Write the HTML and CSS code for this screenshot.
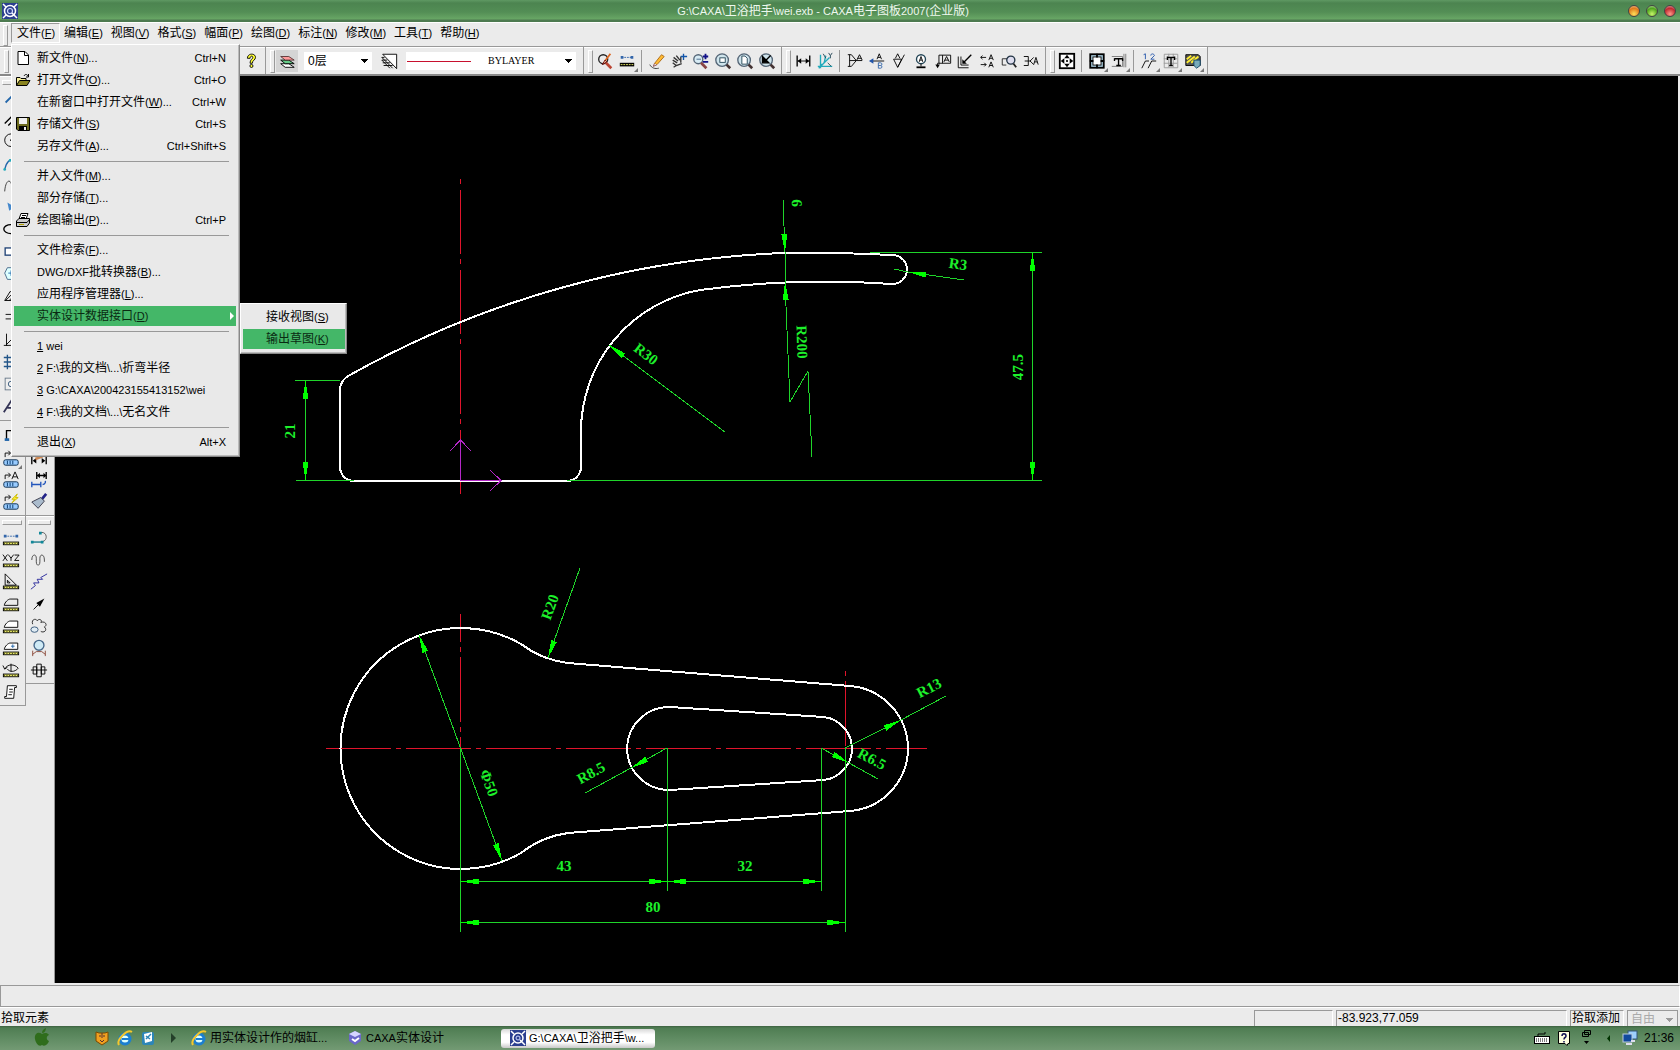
FILE: index.html
```html
<!DOCTYPE html>
<html lang="zh-CN">
<head>
    <meta charset="UTF-8">
    <meta name="viewport" content="width=device-width, initial-scale=1.0">
    <title>CAXA电子图板2007</title>
    <link rel="stylesheet" href="styles.css">
</head>
<body>

    <header class="titlebar">
        <svg class="app-icon" viewBox="0 0 16 16"><rect width="16" height="16" fill="#2b3f8f"/><circle cx="8" cy="8" r="5.500" fill="none" stroke="#fff" stroke-width="1.500"/><circle cx="8" cy="8" r="2.500" fill="none" stroke="#cfd8ff" stroke-width="1.200"/><path d="M10 10L15 15M1 1L4 4M15 1L12 4M1 15L4 12" stroke="#fff" stroke-width="1.500"/></svg>
        <h1>G:\CAXA\<span class="zh">卫浴把手</span>\wei.exb - CAXA<span class="zh">电子图板</span>2007(<span class="zh">企业版</span>)</h1>
        <div class="window-buttons">
            <button class="ball orange" aria-label="最小化"></button>
            <button class="ball green" aria-label="还原"></button>
            <button class="ball red" aria-label="关闭"></button>
        </div>
    </header>

    <!-- 菜单栏 -->
    <nav class="menubar">
        <ul>
            <li class="open">
                <button>文件<span>(<u>F</u>)</span></button>
                <div class="menu file-menu">
                    <button><svg viewBox="0 0 16 16"><path d="M3 1.500H10L13.500 5V14.500H3Z" fill="#fff" stroke="#000"/><path d="M9.500 1.500V5.500H13.500" fill="none" stroke="#000"/></svg>新文件<span>(<u>N</u>)...</span><kbd>Ctrl+N</kbd></button>
                    <button><svg viewBox="0 0 16 16"><path d="M1.500 13.500V5.500H5L6 6.500H11V8.500" fill="#f6ef9a" stroke="#000"/><path d="M1.500 13.500L4.500 8.500H15L12 13.500Z" fill="#8a8420" stroke="#000"/><path d="M9 4C10 2 12 2 13 4M13.500 2V5H11" fill="none" stroke="#000"/></svg>打开文件<span>(<u>O</u>)...</span><kbd>Ctrl+O</kbd></button>
                    <button>在新窗口中打开文件<span>(<u>W</u>)...</span><kbd>Ctrl+W</kbd></button>
                    <button><svg viewBox="0 0 16 16"><path d="M1.500 1.500H14.500V14.500H3L1.500 13Z" fill="#6d6b1e" stroke="#000"/><rect x="4" y="2" width="8" height="6" fill="#eee"/><rect x="4" y="10" width="8" height="5" fill="#000"/><rect x="9" y="11" width="2" height="3" fill="#eee"/></svg>存储文件<span>(<u>S</u>)</span><kbd>Ctrl+S</kbd></button>
                    <button>另存文件<span>(<u>A</u>)...</span><kbd>Ctrl+Shift+S</kbd></button>
                    <hr>
                    <button>并入文件<span>(<u>M</u>)...</span></button>
                    <button>部分存储<span>(<u>T</u>)...</span></button>
                    <button><svg viewBox="0 0 16 16"><path d="M4 7L6 1.500H13L11 7" fill="#fff" stroke="#000"/><path d="M1.500 9L4 6.500H14.500V11L12 14.500H1.500Z" fill="#ccc" stroke="#000"/><path d="M1 10.500H12L15 7M7 3.500H11M6 5.500H10" fill="none" stroke="#000"/><path d="M4 12.500H9" stroke="#b0a000"/></svg>绘图输出<span>(<u>P</u>)...</span><kbd>Ctrl+P</kbd></button>
                    <hr>
                    <button>文件检索<span>(<u>F</u>)...</span></button>
                    <button><span>DWG/DXF</span>批转换器<span>(<u>B</u>)...</span></button>
                    <button>应用程序管理器<span>(<u>L</u>)...</span></button>
                    <button class="selected">实体设计数据接口<span>(<u>D</u>)</span></button>
                    <hr>
                    <button><span><u>1</u> wei</span></button>
                    <button><span><u>2</u> F:\</span>我的文档<span>\...\</span>折弯半径</button>
                    <button><span><u>3</u> G:\CAXA\200423155413152\wei</span></button>
                    <button><span><u>4</u> F:\</span>我的文档<span>\...\</span>无名文件</button>
                    <hr>
                    <button>退出<span>(<u>X</u>)</span><kbd>Alt+X</kbd></button>
                    <div class="menu sub-menu">
                        <button>接收视图<span>(<u>S</u>)</span></button>
                        <button class="selected">输出草图<span>(<u>K</u>)</span></button>
                    </div>
                </div>
            </li>
            <li><button>编辑<span>(<u>E</u>)</span></button></li>
            <li><button>视图<span>(<u>V</u>)</span></button></li>
            <li><button>格式<span>(<u>S</u>)</span></button></li>
            <li><button>幅面<span>(<u>P</u>)</span></button></li>
            <li><button>绘图<span>(<u>D</u>)</span></button></li>
            <li><button>标注<span>(<u>N</u>)</span></button></li>
            <li><button>修改<span>(<u>M</u>)</span></button></li>
            <li><button>工具<span>(<u>T</u>)</span></button></li>
            <li><button>帮助<span>(<u>H</u>)</span></button></li>
        </ul>
    </nav>

    <!-- 工具栏 -->
    <div class="toolbars">
        <div class="toolbar standard">
            <button aria-label="帮助"><svg viewBox="0 0 20 20"><path d="M6 7C6 1 15 1 15 6C15 9 11.500 9 11.500 12.500H9C9 8 12 8 12 6C12 4 9 4 9 7Z" fill="#ff3" stroke="#000"/><circle cx="10.500" cy="15.500" r="1.700" fill="#ff3" stroke="#000"/></svg></button>
        </div>
        <div class="toolbar props">
            <button class="pressed" aria-label="层控制"><svg viewBox="0 0 20 20"><path d="M3 13H12L18 17H8Z" fill="#fff" stroke="#000"/><path d="M3 9H12L18 13H8Z" fill="#6c8" stroke="#000"/><path d="M3 5H12L18 9H8Z" fill="#f99" stroke="#533"/></svg></button>
            <select class="layer" aria-label="当前层"><option>0层</option></select>
            <button aria-label="线型"><svg viewBox="0 0 20 20"><path d="M3 2.500H18.500V18.500Z" fill="#fff" stroke="#000"/><path d="M2 6H5M2 9H8M3 12H11M4 15H14M2 6L14 18M2 9L11 18" fill="none" stroke="#000"/></svg></button>
            <div class="linetype">
                <select aria-label="线型选择"><option>BYLAYER</option></select>
                <i></i>
            </div>
        </div>
        <div class="toolbar">
            <button aria-label="重画"><svg viewBox="0 0 20 20"><circle cx="8" cy="8" r="5" fill="none" stroke="#222" stroke-width="1.500"/><path d="M11 12L17 18" stroke="#b43" stroke-width="3"/><path d="M16 2L10 10" stroke="#d62" stroke-width="2"/><path d="M10 9L7 14L12 11Z" fill="#f9c9a0" stroke="#600"/></svg></button>
            <button class="more" aria-label="查询"><svg viewBox="0 0 20 20"><path d="M4 6H16" stroke="#36a" stroke-dasharray="2 1"/><path d="M3 6H6M14 6H17" stroke="#36a" stroke-width="3"/><rect x="2" y="12" width="16" height="4" fill="#000"/><path d="M3 14H17" stroke="#ee6" stroke-dasharray="2 1"/></svg></button>
            <hr>
            <button aria-label="铅笔"><svg viewBox="0 0 20 20"><path d="M7 13L15 3L18 5L10 14Z" fill="#fb3" stroke="#a61"/><path d="M7 13L6 16L10 14" fill="#fff" stroke="#844"/><path d="M2 14C4 18 8 19 12 18" fill="none" stroke="#333"/></svg></button>
            <button aria-label="平移"><svg viewBox="0 0 20 20"><path d="M4 17L7 15L13 13M3 9L8 12M4 6L9 10M7 4L11 9M12 5L12 12M3 12L7 15" fill="none" stroke="#333" stroke-width="1.500"/><path d="M15 2V9M12 5H19" stroke="#15a" stroke-width="1.500"/></svg></button>
            <button aria-label="缩放"><svg viewBox="0 0 20 20"><circle cx="7" cy="8" r="5" fill="#d8ecf5" stroke="#567" stroke-width="1.500"/><path d="M10 12L16 18" stroke="#844" stroke-width="3"/><path d="M5 8H10" stroke="#468"/><path d="M15 2V8M12 5H18M12 11H18" stroke="#118" stroke-width="2"/></svg></button>
            <button aria-label="窗口缩放"><svg viewBox="0 0 20 20"><circle cx="9" cy="9" r="7" fill="#cfe4ec" stroke="#567" stroke-width="1.500"/><path d="M14 14L18 18" stroke="#433" stroke-width="3"/><rect x="6.500" y="6.500" width="6" height="5" fill="#fff" stroke="#245"/></svg></button>
            <button aria-label="显示全部"><svg viewBox="0 0 20 20"><circle cx="9" cy="9" r="7" fill="#cfe4ec" stroke="#567" stroke-width="1.500"/><path d="M14 14L18 18" stroke="#433" stroke-width="3"/><path d="M6.500 4.500H10L12.500 7V13.500H6.500Z" fill="#fff" stroke="#245"/></svg></button>
            <button aria-label="显示回溯"><svg viewBox="0 0 20 20"><circle cx="9" cy="9" r="7" fill="#cfe4ec" stroke="#567" stroke-width="1.500"/><path d="M14 14L18 18" stroke="#433" stroke-width="3"/><path d="M5 5V12H12ZM8 10L14 4" fill="#000" stroke="#000" stroke-width="1.500"/></svg></button>
        </div>
        <div class="toolbar">
            <button aria-label="尺寸标注"><svg viewBox="0 0 20 20"><path d="M3.500 4V16M17.500 4V16" stroke="#000" stroke-width="1.500"/><path d="M4 10H17" stroke="#000"/><path d="M4 10L8 7V13ZM17 10L13 7V13Z"/></svg></button>
            <button aria-label="坐标标注"><svg viewBox="0 0 20 20"><path d="M5 3V18M2 16H18M3 18L15 6M5 14C11 14 9 8 11 4" fill="none" stroke="#2ab" stroke-width="1.500"/><path d="M8 2L11 7M14 1L16 4L18 1M16 4V7M13 12L17 16" stroke="#245" fill="none"/></svg></button>
            <hr>
            <button aria-label="倒角标注"><svg viewBox="0 0 20 20"><path d="M2 3H6L11 9V10L6 16H2M4 3V16M4 9.500H18M12 9L15 3L18 9M13 7H17" fill="none" stroke="#000"/></svg></button>
            <button aria-label="引出说明"><svg viewBox="0 0 20 20"><path d="M10 8L12.500 2L15 8M11 6H14M3 10H18" fill="none" stroke="#000"/><path d="M1 10L6 7V13Z" fill="#25a"/><path d="M11.500 12V18H14C16 18 16 15 14 15H11.500M14 15C16 15 16 12 14 12H11.500" fill="none" stroke="#36a"/></svg></button>
            <button aria-label="粗糙度"><svg viewBox="0 0 20 20"><path d="M4 8H13L8.500 17ZM8.500 17L16 3M6 7L8.500 2L11 7" fill="none" stroke="#000"/></svg></button>
            <button aria-label="基准代号"><svg viewBox="0 0 20 20"><circle cx="10" cy="8" r="5" fill="#fff" stroke="#245" stroke-width="1.500"/><path d="M8 11L10 5L12 11M8.500 9H11.500M10 13V16" fill="none" stroke="#000"/><path d="M5 17H15" stroke="#000" stroke-width="2"/></svg></button>
            <button aria-label="形位公差"><svg viewBox="0 0 20 20"><path d="M5.500 3.500H18.500V12.500H5.500ZM9.500 3.500V12.500M4 15V12.500H6M11 11L14 5L17 11M12 9H16" fill="none" stroke="#000"/><path d="M1.500 14H6.500L4 18Z"/></svg></button>
            <button aria-label="焊接符号"><svg viewBox="0 0 20 20"><path d="M2.500 5V17.500H14M5.500 5V14.500H14" fill="none" stroke="#000"/><path d="M17 3L9 11" stroke="#000" stroke-width="1.500"/><path d="M7 13V8L12 13Z"/></svg></button>
            <button aria-label="剖切符号"><svg viewBox="0 0 20 20"><path d="M3 6H9M3 6L5 4M3 6L5 8M12 9L14.500 3L17 9M13 7H16M12 17L14.500 11L17 17M13 15H16M3 14H9M9 14L7 12M9 14L7 16" fill="none" stroke="#000"/></svg></button>
            <button aria-label="局部放大"><svg viewBox="0 0 20 20"><path d="M2.500 14.500V7.500H8M2.500 14.500H7" fill="none" stroke="#222"/><circle cx="12" cy="9" r="4.500" fill="#dde" stroke="#234" stroke-width="1.500"/><path d="M15 13L18 17" stroke="#222" stroke-width="2"/></svg></button>
            <button aria-label="中心孔"><svg viewBox="0 0 20 20"><path d="M2 5H7V15H2M3 10H10M13 6L9 10L13 14M13 14L15.500 6L18 14M14 11H17" fill="none" stroke="#000"/></svg></button>
        </div>
        <div class="toolbar">
            <button aria-label="动态平移"><svg viewBox="0 0 20 20"><rect x="2" y="2" width="16" height="16" fill="#fff" stroke="#000" stroke-width="2"/><path d="M10 3L13 7H7ZM10 17L13 13H7ZM3 10L7 7V13ZM17 10L13 7V13Z"/><rect x="9" y="9" width="2" height="2"/></svg></button>
            <hr>
            <button class="more" aria-label="图幅"><svg viewBox="0 0 20 20"><rect x="2.500" y="2.500" width="15" height="15" fill="#acd" stroke="#000" stroke-width="2"/><rect x="5.500" y="5.500" width="9" height="9" fill="#fff" stroke="#000"/><path d="M10 2V6M10 14V18M2 10H6M14 10H18" stroke="#000" stroke-width="2"/></svg></button>
            <button class="more" aria-label="标题栏"><svg viewBox="0 0 20 20"><path d="M2 5H14V16H2M17.500 2V17M15.500 2V17" fill="none" stroke="#777"/><path d="M5 7.500H14M9.500 7V15M7 15H12M5 7V10M14 7V10" fill="none" stroke="#000" stroke-width="1.500"/></svg></button>
            <hr>
            <button class="more" aria-label="序号"><svg viewBox="0 0 20 20"><path d="M4 3L6 2V8M12 4C12 1 16 2 16 4L12 8H16" fill="none" stroke="#25a"/><path d="M2 18L6 10H10M9 18L13 10H18" fill="none" stroke="#000"/></svg></button>
            <button class="more" aria-label="明细表"><svg viewBox="0 0 20 20"><path d="M2.500 2.500H17.500V17.500H2.500ZM2 7.500H17M7.500 2V17M12.500 2V17M2 12.500H17" fill="none" stroke="#999"/><path d="M6 6H14M10 6V15M8 15H12M6 5V9M14 5V9" stroke="#000" stroke-width="1.500"/></svg></button>
            <button class="more" aria-label="图库"><svg viewBox="0 0 20 20"><path d="M2 3H16L18 5V15H2Z" fill="#555" stroke="#000"/><path d="M3 8L8 4M3 12L12 5M8 12L16 5" stroke="#fe3" stroke-width="2"/><path d="M11 9H18V15L14 18L11 15Z" fill="#7ab" stroke="#146"/></svg></button>
        </div>
    </div>

    <main class="workspace">
        <!-- 左侧绘图工具 -->
        <aside class="side">
            <div class="side-column">
                <div class="toolbar vertical">
                    <button aria-label="直线"><svg viewBox="0 0 20 20"><path d="M4 15L15 4" stroke="#26a" stroke-width="2"/></svg></button>
                    <button aria-label="平行线"><svg viewBox="0 0 20 20"><path d="M3 14L13 4M7 16L17 6" stroke="#000" stroke-width="1.500"/></svg></button>
                    <button aria-label="圆"><svg viewBox="0 0 20 20"><circle cx="10" cy="8" r="7" fill="none" stroke="#000"/><circle cx="10" cy="8" r="1"/></svg></button>
                    <button aria-label="圆弧"><svg viewBox="0 0 20 20"><path d="M3 16C5 8 8 4 16 4" fill="none" stroke="#26a" stroke-width="1.500"/><circle cx="3" cy="16" r="1.500" fill="#2ab"/><circle cx="9" cy="6" r="1.500" fill="#2ab"/></svg></button>
                    <button aria-label="样条"><svg viewBox="0 0 20 20"><path d="M3 16C4 2 10 2 11 10S16 16 18 6" fill="none" stroke="#333"/></svg></button>
                    <button aria-label="点"><svg viewBox="0 0 20 20"><path d="M6 4L14 9L8 13Z" fill="#48c"/></svg></button>
                    <button aria-label="椭圆"><svg viewBox="0 0 20 20"><ellipse cx="10" cy="9" rx="8" ry="5" fill="none" stroke="#000" stroke-width="1.500"/></svg></button>
                    <button aria-label="矩形"><svg viewBox="0 0 20 20"><rect x="3.500" y="5.500" width="13" height="8" fill="#fff" stroke="#247" stroke-width="1.500"/></svg></button>
                    <button aria-label="正多边形"><svg viewBox="0 0 20 20"><path d="M6 3H14L18 9L14 16H6L3 9Z" fill="#dff" stroke="#468"/><path d="M10 6V12M7 9H13" stroke="#26a"/></svg></button>
                    <button aria-label="剖面线"><svg viewBox="0 0 20 20"><path d="M3 15L9 5L16 8V15ZM4 15L12 7M8 15L15 8" fill="none" stroke="#000"/></svg></button>
                    <button aria-label="等距线"><svg viewBox="0 0 20 20"><path d="M4 6H16M4 11H16" stroke="#000"/></svg></button>
                    <button aria-label="坐标"><svg viewBox="0 0 20 20"><path d="M5 3V16H17M2 16H6M5 15L13 7" fill="none" stroke="#000"/></svg></button>
                    <button aria-label="中心线"><svg viewBox="0 0 20 20"><path d="M6 2V18M12 2V18M2 5H18M2 10H18M2 15H18" stroke="#258" stroke-width="1.500"/></svg></button>
                    <button aria-label="局部"><svg viewBox="0 0 20 20"><rect x="3.500" y="3.500" width="13" height="13" fill="#eee" stroke="#678"/><circle cx="10" cy="10" r="3" fill="none" stroke="#357"/></svg></button>
                    <button aria-label="文字"><svg viewBox="0 0 20 20"><path d="M2 17L11 3L14 17M6 12H13" fill="none" stroke="#335" stroke-width="2"/></svg></button>
                    <hr>
                    <button aria-label="块"><svg viewBox="0 0 20 20"><path d="M5 14V4H15" fill="none" stroke="#000" stroke-width="1.500"/><path d="M3 14H8" stroke="#26a" stroke-width="3"/></svg></button>
                    <button class="more" aria-label="提取图符"><svg viewBox="0 0 20 20"><path d="M3.500 9V4.500H9M7 2L9.500 4.500L7 7" fill="none" stroke="#000"/><rect x="2" y="12" width="16" height="6" rx="2" fill="#9cf" stroke="#024"/><path d="M6 13V17M9 13V17M12 13V17" stroke="#036"/></svg></button>
                    <button aria-label="定义图符"><svg viewBox="0 0 20 20"><path d="M3.500 9V4.500H9M7 2L9.500 4.500L7 7M11 9L14.500 1L18 9M12 6.500H17" fill="none" stroke="#000"/><rect x="2" y="12" width="16" height="6" rx="2" fill="#9cf" stroke="#024"/><path d="M6 13V17M9 13V17M12 13V17" stroke="#036"/></svg></button>
                    <button aria-label="驱动图符"><svg viewBox="0 0 20 20"><path d="M3.500 9V4.500H9M7 2L9.500 4.500L7 7" fill="none" stroke="#000"/><path d="M17 1L11 7H14L11 11L18 5H15Z" fill="#fe3" stroke="#cb0"/><rect x="2" y="12" width="16" height="6" rx="2" fill="#9cf" stroke="#024"/><path d="M6 13V17M9 13V17M12 13V17" stroke="#036"/></svg></button>
                </div>
                <div class="toolbar vertical">
                    <button aria-label="两点距离"><svg viewBox="0 0 20 20"><path d="M3 8H17" stroke="#36a" stroke-dasharray="2 1"/><path d="M2 8H5M15 8H18" stroke="#36a" stroke-width="3"/><rect x="1.500" y="14.500" width="17" height="3" fill="#ee6" stroke="#000"/><path d="M2 16H18" stroke="#000" stroke-dasharray="1 2"/></svg></button>
                    <button aria-label="点坐标"><svg viewBox="0 0 20 20"><path d="M1 4L6 11M6 4L1 11M7 4L10 8L13 4M10 8V11M14 4.500H19L14 10.500H19" fill="none" stroke="#000"/><rect x="1.500" y="14.500" width="17" height="3" fill="#ee6" stroke="#000"/><path d="M2 16H18" stroke="#000" stroke-dasharray="1 2"/></svg></button>
                    <button aria-label="角度"><svg viewBox="0 0 20 20"><path d="M3.500 1V13.500H16ZM6 8V11H9Z" fill="none" stroke="#000"/><rect x="1.500" y="14.500" width="17" height="3" fill="#ee6" stroke="#000"/><path d="M2 16H18" stroke="#000" stroke-dasharray="1 2"/></svg></button>
                    <button aria-label="元素属性"><svg viewBox="0 0 20 20"><path d="M2.500 11.500C3 8 7 4.500 9 4.500H17.500V11.500Z" fill="none" stroke="#000"/><rect x="1.500" y="14.500" width="17" height="3" fill="#ee6" stroke="#000"/><path d="M2 16H18" stroke="#000" stroke-dasharray="1 2"/></svg></button>
                    <button aria-label="周长"><svg viewBox="0 0 20 20"><path d="M2.500 11.500C3 8 7 4.500 9 4.500H17.500V11.500Z" fill="#fff" stroke="#000"/><rect x="1.500" y="14.500" width="17" height="3" fill="#ee6" stroke="#000"/><path d="M2 16H18" stroke="#000" stroke-dasharray="1 2"/></svg></button>
                    <button aria-label="面积"><svg viewBox="0 0 20 20"><path d="M2.500 11.500C3 8 7 4.500 9 4.500H17.500V11.500Z" fill="#fff" stroke="#000"/><path d="M12 6V10M10 8H14" stroke="#26a"/><rect x="1.500" y="14.500" width="17" height="3" fill="#ee6" stroke="#000"/><path d="M2 16H18" stroke="#000" stroke-dasharray="1 2"/></svg></button>
                    <button aria-label="惯性矩"><svg viewBox="0 0 20 20"><path d="M3 9C6 3 14 3 18 8C14 13 8 12 6 9M10 3V12M1 5L3 9L6 7" fill="none" stroke="#000"/><rect x="1.500" y="14.500" width="17" height="3" fill="#ee6" stroke="#000"/><path d="M2 16H18" stroke="#000" stroke-dasharray="1 2"/></svg></button>
                    <button aria-label="系统状态"><svg viewBox="0 0 20 20"><path d="M6 3H16V5H14L13 17H3V15H5Z" fill="#fff" stroke="#000"/><path d="M8 7H12M8 10H12M7 13H11" stroke="#000"/></svg></button>
                </div>
            </div>
            <div class="side-column">
                <div class="toolbar vertical edit-tools">
                    <button aria-label="拉伸"><svg viewBox="0 0 20 20"><path d="M2 8V17M18 8V17" stroke="#000" stroke-width="1.500"/><path d="M3 13L7 10V16ZM17 13L13 10V16Z"/><path d="M6 11L14 8" stroke="#c85" stroke-width="3"/></svg></button>
                    <button aria-label="标注编辑"><svg viewBox="0 0 20 20"><path d="M7.500 1V9M18 1V9M8 5H18" stroke="#000" stroke-width="1.500"/><path d="M8 5L11 2V8ZM18 5L15 2V8Z"/><path d="M2 12V18M12 12V18M2 15H12M14 15C18 15 17 11 17 11" fill="none" stroke="#25b" stroke-width="1.500"/></svg></button>
                    <button aria-label="格式刷"><svg viewBox="0 0 20 20"><path d="M18 1L13 7" stroke="#228" stroke-width="3"/><path d="M2 10L12 5L16 9L9 17Z" fill="#abc" stroke="#334"/></svg></button>
                </div>
                <div class="toolbar vertical">
                    <button aria-label="多段线"><svg viewBox="0 0 20 20"><path d="M3 14.500H13" stroke="#178" stroke-width="1.500"/><path d="M11 4C20 2 20 14 13 14" fill="none" stroke="#555"/><path d="M1 13h3v3H1zM12 13h3v3H12zM10 3h3v3H10z" fill="#189"/></svg></button>
                    <button aria-label="波浪线"><svg viewBox="0 0 20 20"><path d="M2 10C2 3 7 3 7 8V12C7 17 11 17 11 12V8C11 3 16 3 16 10V12" fill="none" stroke="#444"/></svg></button>
                    <button aria-label="双折线"><svg viewBox="0 0 20 20"><path d="M1 18L6 14L4 11H10L8 7H14L12 5L19 1" fill="none" stroke="#229"/></svg></button>
                    <button aria-label="箭头"><svg viewBox="0 0 20 20"><path d="M4 16L10 10" stroke="#000"/><path d="M16 4L7 9L11 13Z"/></svg></button>
                    <button aria-label="齿轮"><svg viewBox="0 0 20 20"><path d="M3 8C1 3 6 1 8 4C11 1 14 4 12 6C17 4 20 9 16 11C20 15 15 18 12 16" fill="none" stroke="#222"/><ellipse cx="5" cy="14" rx="4" ry="3" fill="#e0ecf4" stroke="#357"/></svg></button>
                    <button aria-label="圆弧拟合"><svg viewBox="0 0 20 20"><circle cx="10" cy="7" r="5.500" fill="#cfeaf5" stroke="#468" stroke-width="1.500"/><path d="M3 13V19M17 13V19M3 17L7 14H13L17 17" fill="none" stroke="#843"/></svg></button>
                    <button aria-label="孔轴"><svg viewBox="0 0 20 20"><path d="M1 10H19M3.500 6.500H7.500V14.500H3.500ZM7.500 3.500H12.500V17.500H7.500ZM12.500 6.500H16.500V14.500H12.500Z" fill="none" stroke="#000"/></svg></button>
                </div>
            </div>
        </aside>

        <!-- 图纸 -->
        <svg class="drawing" role="img" aria-label="卫浴把手">
            <defs>
                <marker id="arrow" markerWidth="19" markerHeight="6" refX="18" refY="3" orient="auto-start-reverse" markerUnits="userSpaceOnUse">
                    <path d="M18 3L0 0V6Z" fill="#0f0"/>
                </marker>
            </defs>
            <g transform="translate(-55 -76)">
                <g class="center">
                    <path d="M460.500 179V495" stroke-dasharray="5 6 64 5"/>
                    <path d="M460.500 614V748" stroke-dasharray="65 5 5 5" stroke-dashoffset="37"/>
                    <path d="M326 748.500H927" stroke-dasharray="65 5 5 5"/>
                    <path d="M845.500 671V748" stroke-dasharray="5 5 65 5"/>
                </g>
                <g class="outline">
                    <path d="M354 481A14 14 0 0 1 340 467V390Q340 380 350 375A962 962 0 0 1 784 253H840L893 255A14.500 14.500 0 0 1 892 284A933 933 0 0 0 700 290A144 144 0 0 0 581 432V467A14 14 0 0 1 567 481Z"/>
                    <path d="M521 644A96 96 0 0 0 568 663L850 686A63 63 0 0 1 908 748A63 63 0 0 1 850 811L568 833A96 96 0 0 0 521 853A120.500 120.500 0 1 1 521 644Z"/>
                    <path d="M670 707L824 717A32 32 0 0 1 852 748A32 32 0 0 1 824 780L670 790A42 42 0 0 1 627 748A42 42 0 0 1 670 707Z"/>
                </g>
                <g class="dim">
                    <!-- 21 -->
                    <path d="M295 380.500H340M296 480.500H354"/>
                    <path class="both" d="M305.500 381V480"/>
                    <!-- 47.5 -->
                    <path d="M870 252.500H1042M567 480.500H1042"/>
                    <path class="both" d="M1032.500 253V480"/>
                    <!-- 6, R200 -->
                    <path class="end" d="M783 200L785 252"/>
                    <path class="start" d="M785 282L790 402L808 371L812 457"/>
                    <path d="M785 252V282"/>
                    <!-- R3, R30 -->
                    <path class="start" d="M908 272L964 280"/>
                    <path d="M894 269L908 272"/>
                    <path class="start" d="M609 345L725 432"/>
                    <!-- 俯视图 -->
                    <path d="M460.500 748V932M667.500 748V891M821.500 748V891M845.500 748V932"/>
                    <path class="both" d="M461 881.500H667"/>
                    <path class="both" d="M668 881.500H821"/>
                    <path class="both" d="M461 922.500H845"/>
                    <path class="both" d="M419 635L502 861"/>
                    <path class="end" d="M580 568L548 658"/>
                    <path class="end" d="M667 748L631 768"/>
                    <path d="M631 768L585 793"/>
                    <path class="end" d="M821 748L849 763"/>
                    <path d="M849 763L878 779"/>
                    <path class="end" d="M845 748L901 720"/>
                    <path d="M901 720L946 696"/>
                </g>
                <g class="ucs">
                    <path d="M460.500 480V440M450 451L460.500 440L471 451M460 480.500H501M490 470L501 480.500L490 491"/>
                </g>
                <g class="dim-text">
                    <text transform="translate(290 431) rotate(-90)">21</text>
                    <text transform="translate(1018 367) rotate(-90)">47.5</text>
                    <text transform="translate(797 203) rotate(88)">6</text>
                    <text transform="translate(802 342) rotate(88)">R200</text>
                    <text transform="translate(958 264) rotate(8)">R3</text>
                    <text transform="translate(646 354) rotate(37)">R30</text>
                    <text transform="translate(550 607) rotate(-70)">R20</text>
                    <text transform="translate(489 783) rotate(70)">Φ50</text>
                    <text transform="translate(591 773) rotate(-29)">R8.5</text>
                    <text transform="translate(872 759) rotate(28)">R6.5</text>
                    <text transform="translate(929 688) rotate(-27)">R13</text>
                    <text transform="translate(564 866)">43</text>
                    <text transform="translate(745 866)">32</text>
                    <text transform="translate(653 907)">80</text>
                </g>
            </g>
        </svg>
    </main>

    <div class="command-line"></div>

    <footer class="statusbar">
        <span class="prompt">拾取元素</span>
        <span class="cell blank"></span>
        <span class="cell coords">-83.923,77.059</span>
        <span class="cell pick">拾取添加</span>
        <select aria-label="捕捉方式" disabled><option>自由</option></select>
    </footer>

    <!-- 任务栏 -->
    <div class="taskbar">
        <button class="start" aria-label="开始"><svg viewBox="0 0 18 20"><path d="M9 6C5 3 1 6 2 11C3 16 6 19 9 17C12 19 15 16 16 13C13 12 13 8 16 7C14 4 11 5 9 6Z" fill="#2f6d1c"/><path d="M9 5C9 2 11 1 13 0C13 3 11 5 9 5Z" fill="#2f6d1c"/></svg></button>
        <div class="quick">
            <button aria-label="浏览器"><svg viewBox="0 0 16 16"><path d="M2 2L5 3H11L14 2V11L8 15L2 11Z" fill="#f0a020" stroke="#7a4a00"/><path d="M5 6H7M9 6H11M6 10L8 12L10 10M8 3V8" stroke="#533" fill="none"/></svg></button>
            <button aria-label="Internet Explorer"><svg viewBox="0 0 16 16"><circle cx="8" cy="9" r="5" fill="#dff" stroke="#1c7fd0" stroke-width="3"/><path d="M5 9H13" stroke="#1c7fd0" stroke-width="2"/><path d="M2 15C-1 10 10 -1 15 2" fill="none" stroke="#f5c72c" stroke-width="2"/></svg></button>
            <button aria-label="显示桌面"><svg viewBox="0 0 16 16"><rect x="2" y="2" width="12" height="13" rx="2" fill="#2d86b8"/><path d="M4 4L12 2V11L5 13Z" fill="#fff"/><path d="M6 9L11 4M6 6L10 9" stroke="#2d86b8" stroke-width="1.500"/></svg></button>
        </div>
        <i class="expand"></i>
        <button class="task"><svg viewBox="0 0 16 16"><circle cx="8" cy="9" r="5" fill="#dff" stroke="#1c7fd0" stroke-width="3"/><path d="M5 9H13" stroke="#1c7fd0" stroke-width="2"/><path d="M2 15C-1 10 10 -1 15 2" fill="none" stroke="#f5c72c" stroke-width="2"/></svg>用实体设计作的烟缸<span>...</span></button>
        <button class="task"><svg viewBox="0 0 16 16"><path d="M2 4L8 1L14 4V11L8 15L2 11Z" fill="#6a68c8"/><path d="M2 4L8 7L14 4L8 1Z" fill="#d5d5ff"/><path d="M5 9L8 11L12 8" stroke="#fff" stroke-width="2" fill="none"/></svg><span>CAXA</span>实体设计</button>
        <button class="task active"><svg viewBox="0 0 16 16"><rect width="16" height="16" fill="#2b3f8f"/><circle cx="8" cy="8" r="5" fill="none" stroke="#fff" stroke-width="1.500"/><circle cx="8" cy="8" r="2" fill="none" stroke="#cfd8ff"/><path d="M10 10L15 15M1 1L4 4M15 1L12 4M1 15L4 12" stroke="#fff" stroke-width="1.500"/></svg><span>G:\CAXA\</span>卫浴把手<span>\w...</span></button>
        <div class="tray">
            <svg viewBox="0 0 16 16"><rect x="0.500" y="6.500" width="15" height="7" fill="#fff" stroke="#000"/><path d="M2 9H14M2 11H14" stroke="#000" stroke-dasharray="1 1"/><path d="M4 6V4H11V2" fill="none" stroke="#000"/></svg>
            <svg viewBox="0 0 16 16"><path d="M2.500 1.500H13.500V13.500H12L11 15.500L9 13.500H2.500Z" fill="#ffffe1" stroke="#000"/><path d="M6 6C6 3 10 3 10 6C10 8 8 7 8 9.500M8 11V12.500" fill="none" stroke="#115" stroke-width="1.500"/></svg>
            <svg viewBox="0 0 16 16"><path d="M6.500 0.500H12.500V4.500H6.500ZM4.500 2.500H10.500V6.500H4.500Z" fill="none" stroke="#000"/><path d="M6 11H11L8.500 14Z"/></svg>
            <svg viewBox="0 0 16 16"><path d="M10 5V12L7 8.500Z" fill="#030"/></svg>
            <svg viewBox="0 0 16 16"><rect x="6" y="1" width="9" height="8" fill="#9cd0ff" stroke="#357"/><rect x="1" y="4" width="9" height="8" fill="#124a9e" stroke="#bcd"/><path d="M4 14H10M9 11H13" stroke="#dde" stroke-width="2"/></svg>
            <time>21:36</time>
        </div>
    </div>

</body>
</html>
```

FILE: styles.css
```css
* {
    box-sizing: border-box;
}

body {
    margin: 0;
    height: 100vh;
    display: flex;
    flex-direction: column;
    overflow: hidden;
    background-color: #ebebeb;
    color: #000;
    font-family: "Liberation Sans", "Noto Sans CJK SC", sans-serif;
    font-size: 12px;
}

button, select {
    font: inherit;
    color: inherit;
    margin: 0;
    padding: 0;
    border: none;
    border-radius: 0;
    background: none;
}

/* latin text is set one size smaller than the chinese */
button span, kbd {
    font-family: "Liberation Sans", sans-serif;
    font-size: 11px;
}

svg {
    display: block;
    flex: none;
}

/* Title bar */
.titlebar {
    display: flex;
    align-items: center;
    height: 23px;
    padding: 0 4px 2px 2px;
    background: linear-gradient(#5f9963 0, #4c8450 3px, #538e55 12px, #68a665 19px, #4d7a50 20px, #4d7a50 22px, #fff 22px);
}

.app-icon {
    width: 16px;
    height: 16px;
}

.titlebar h1 {
    flex: 1;
    margin: 0;
    text-align: center;
    font-size: 11px;
    font-weight: normal;
    line-height: 20px;
    color: #eef8ee;
}

.titlebar .zh {
    font-size: 12px;
}

.window-buttons {
    display: flex;
    gap: 6px;
}

.ball {
    width: 12px;
    height: 12px;
    border-radius: 50%;
    border: 1px solid #444;
}

.orange {
    background: radial-gradient(circle at 50% 80%, #ffe05a, #e07a1c 60%, #eec8a0);
}

.green {
    background: radial-gradient(circle at 50% 80%, #c8f56a, #4fa51e 60%, #c8e6b0);
}

.red {
    background: radial-gradient(circle at 50% 80%, #ff9a8a, #c02a30 60%, #e6b0b0);
}

/* Menus */
.menubar {
    height: 24px;
    padding-left: 11px;
    border-bottom: 1px solid #999;
    position: relative;
}

.menubar::before {
    content: "";
    position: absolute;
    left: 3px;
    top: 2px;
    width: 3px;
    height: 19px;
    border: 1px solid;
    border-color: #fff #999 #999 #fff;
}

.menubar ul {
    display: flex;
    margin: 0;
    padding: 0;
    list-style: none;
}

.menubar li {
    position: relative;
}

.menubar li > button {
    height: 20px;
    padding: 0 3px;
    border: 1px solid transparent;
    line-height: 18px;
    white-space: nowrap;
}

.menubar li.open > button {
    border-color: #999 #fff #fff #999;
    padding: 0 4px 0 5px;
}

.menu {
    position: absolute;
    z-index: 10;
    padding: 2px;
    background-color: #e9e9e9;
    border: 1px solid;
    border-color: #fff #888 #888 #fff;
    box-shadow: inset -1px -1px #bbb;
}

.file-menu {
    left: 0;
    top: 21px;
    width: 229px;
}

.menu > button {
    position: relative;
    display: flex;
    align-items: center;
    width: 222px;
    height: 20px;
    margin: 1px 0 2px;
    padding-left: 23px;
    line-height: 20px;
    white-space: pre;
    text-align: left;
}

.menu > button svg {
    width: 16px;
    height: 16px;
    margin: 0 6px 0 -22px;
}

.menu kbd {
    margin-left: auto;
    padding-right: 10px;
}

.menu hr {
    margin: 5px 8px 4px 10px;
    border: none;
    border-top: 1px solid #999;
}

.menu .selected {
    background-color: #44b768;
    color: #0a2a12;
}

.file-menu > .selected::after {
    content: "";
    position: absolute;
    right: 2px;
    top: 6px;
    border: 4px solid transparent;
    border-left-color: #fff;
    border-right: none;
}

.sub-menu {
    left: 228px;
    top: 258px;
    width: 107px;
}

.sub-menu > button {
    width: 102px;
}

/* Toolbars */
.toolbars {
    display: flex;
    height: 29px;
    border-bottom: 2px solid #888;
    position: relative;
}

.toolbar {
    position: relative;
    display: flex;
    align-items: center;
    padding: 0 3px 0 10px;
    border-right: 1px solid #999;
    box-shadow: inset 0 1px #fff;
}

.toolbar::before {
    content: "";
    position: absolute;
    left: 4px;
    top: 3px;
    width: 3px;
    height: 21px;
    border: 1px solid;
    border-color: #fff #999 #999 #fff;
}

.toolbar button {
    position: relative;
    width: 22px;
    height: 22px;
    padding: 2px;
}

.toolbar button svg {
    width: 18px;
    height: 18px;
}

.toolbar .more::after {
    content: "";
    position: absolute;
    right: 0;
    bottom: 0;
    border: 2px solid transparent;
    border-right-color: #777;
    border-bottom-color: #777;
}

.toolbar .pressed {
    background-color: #d4d4d4;
}

.toolbar hr {
    width: 1px;
    height: 22px;
    margin: 0 4px 0 3px;
    border: none;
    background-color: #999;
}

.standard {
    width: 266px;
    justify-content: flex-end;
}

.props {
    width: 318px;
    gap: 6px;
}

.props select, .statusbar select {
    --arrow: linear-gradient(#000, #000);
    appearance: none;
    height: 18px;
    background: var(--arrow) right 4px top 7px / 7px 1px no-repeat,
        var(--arrow) right 5px top 8px / 5px 1px no-repeat,
        var(--arrow) right 6px top 9px / 3px 1px no-repeat,
        var(--arrow) right 7px top 10px / 1px 1px no-repeat,
        #fff;
}

.layer {
    width: 68px;
    padding-left: 4px;
}

.linetype {
    position: relative;
    height: 18px;
}

.linetype select {
    width: 170px;
    padding-left: 82px;
    font-family: "Liberation Serif", serif;
    font-size: 10px;
}

.linetype i {
    position: absolute;
    left: 1px;
    top: 9px;
    width: 64px;
    height: 1px;
    background-color: #c8102e;
}

/* Workspace */
.workspace {
    flex: 1;
    min-height: 0;
    display: flex;
    padding-right: 2px;
}

.side {
    display: flex;
    width: 55px;
    border-right: 1px solid #999;
}

.side-column {
    width: 26px;
}

.side-column + .side-column {
    width: 28px;
}

.vertical {
    flex-direction: column;
    align-items: flex-start;
    padding: 11px 0 2px;
    border-bottom: 1px solid #999;
}

.side-column + .side-column .vertical {
    padding-left: 2px;
    border-right: none;
}

.vertical::before {
    left: 2px;
    right: 3px;
    top: 4px;
    width: auto;
    height: 3px;
}

.vertical hr {
    width: 23px;
    height: 1px;
    margin: 3px 0 4px;
}

.edit-tools {
    height: 440px;
    justify-content: flex-end;
}

.drawing {
    flex: 1;
    min-width: 0;
    height: 100%;
    background-color: #000;
}

.drawing path {
    shape-rendering: crispEdges;
}

.center path {
    stroke: #e0142c;
}

.outline path {
    fill: none;
    stroke: #fff;
    stroke-width: 2px;
}

.dim path {
    fill: none;
    stroke: #1fd42a;
}

.dim .start, .dim .both {
    marker-start: url(#arrow);
}

.dim .end, .dim .both {
    marker-end: url(#arrow);
}

.ucs path {
    fill: none;
    stroke: #b428c8;
}

.dim-text text {
    fill: #1df02b;
    font-family: "Liberation Serif", serif;
    font-size: 15px;
    font-weight: bold;
    text-anchor: middle;
    dominant-baseline: central;
}

/* Bottom rows */
.command-line {
    height: 22px;
    margin-top: 2px;
    border: 1px solid;
    border-color: #999 #fff #999 #999;
}

.statusbar {
    display: flex;
    gap: 3px;
    height: 19px;
    padding: 2px 2px 0 1px;
    border-top: 1px solid #fff;
    line-height: 16px;
}

.prompt {
    flex: 1;
}

.cell {
    height: 17px;
    padding-left: 1px;
    border: 1px solid;
    border-color: #999 #fff #ebebeb #999;
    line-height: 14px;
}

.blank {
    width: 79px;
}

.coords {
    width: 231px;
}

.pick {
    width: 54px;
}

.statusbar select {
    --arrow: linear-gradient(#999, #999);
    width: 51px;
    height: 17px;
    padding-left: 3px;
    border: 1px solid #999;
    background-color: #ebebeb;
    color: #aaa;
    opacity: 1;
}

/* Taskbar */
.taskbar {
    display: flex;
    align-items: center;
    height: 24px;
    padding: 0 6px 0 32px;
    background: linear-gradient(#3d6140 0, #4f7d53 2px, #5f8b62 50%, #739a74);
}

.taskbar svg {
    width: 16px;
    height: 16px;
}

.start svg {
    width: 20px;
    height: 20px;
}

.quick {
    display: flex;
    gap: 7px;
    margin-left: 42px;
}

.expand {
    margin: 0 13px 0 15px;
    border: 5px solid transparent;
    border-left-color: #24402a;
    border-right: none;
}

.task {
    display: flex;
    align-items: center;
    width: 154px;
    height: 19px;
    margin-right: 2px;
    padding-left: 2px;
    line-height: 18px;
    white-space: nowrap;
}

.task svg {
    margin-right: 3px;
}

.task.active {
    padding-left: 9px;
    border-radius: 3px;
    background: linear-gradient(#d8d8d8, #fff 30%, #fff 70%, #c8c8c8);
}

.tray {
    display: flex;
    align-items: center;
    gap: 6px;
    margin-left: auto;
}
```
